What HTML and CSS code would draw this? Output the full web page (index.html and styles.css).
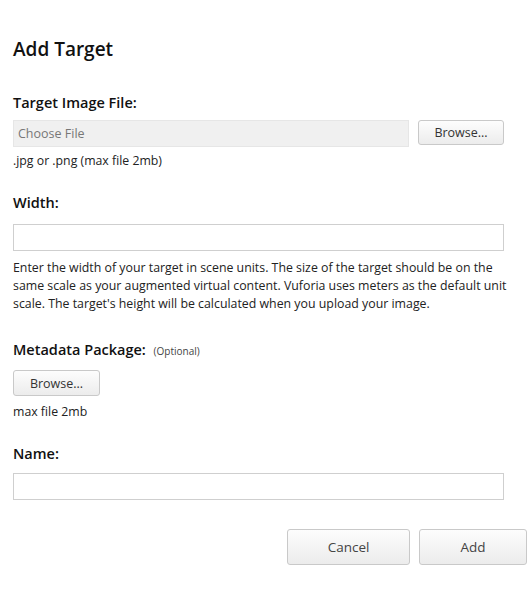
FILE: index.html
```html
<!DOCTYPE html>
<html>
<head>
<meta charset="utf-8">
<link rel="stylesheet" href="styles.css">
</head>
<body>
<div class="dialog">
  <h1 class="title">Add Target</h1>

  <div class="field field-file">
    <div class="label">Target Image File:</div>
    <div class="file-row">
      <div class="file-input">Choose File</div>
      <button class="btn btn-browse">Browse...</button>
    </div>
    <div class="hint">.jpg or .png (max file 2mb)</div>
  </div>

  <div class="field field-width">
    <div class="label">Width:</div>
    <div class="text-input"></div>
    <p class="desc">Enter the width of your target in scene units. The size of the target should be on the same scale as your augmented virtual content. Vuforia uses meters as the default unit scale. The target's height will be calculated when you upload your image.</p>
  </div>

  <div class="field field-meta">
    <div class="label">Metadata Package: <span class="optional">(Optional)</span></div>
    <button class="btn btn-browse-meta">Browse...</button>
    <div class="hint hint-meta">max file 2mb</div>
  </div>

  <div class="field field-name">
    <div class="label">Name:</div>
    <div class="text-input"></div>
  </div>

  <div class="actions">
    <button class="btn btn-action btn-cancel">Cancel</button>
    <button class="btn btn-action btn-add">Add</button>
  </div>
</div>
</body>
</html>
```

FILE: styles.css
```css
html, body {
  margin: 0;
  padding: 0;
  background: #fff;
}
body {
  font-family: "Open Sans", "Liberation Sans", sans-serif;
  color: #222;
}
.dialog {
  padding: 36px 24px 0 13px;
}
.title {
  margin: 0;
  font-size: 19px;
  font-weight: 600;
  line-height: 26px;
  color: #111;
}
.field-file {
  margin-top: 31px;
}
.label {
  font-size: 14.5px;
  font-weight: 600;
  line-height: 20px;
  color: #111;
}
.optional {
  font-size: 10px;
  font-weight: 400;
  color: #444;
  margin-left: 4px;
}
.file-row {
  display: flex;
  align-items: flex-start;
  margin-top: 7px;
  gap: 9px;
}
.file-input {
  width: 396px;
  height: 27px;
  box-sizing: border-box;
  background: #f0f0f0;
  border: 1px solid #e6e6e6;
  font-size: 12.5px;
  color: #777;
  line-height: 25px;
  padding-left: 4px;
}
.btn {
  font-family: "Open Sans", "Liberation Sans", sans-serif;
  background: linear-gradient(#fdfdfd, #ececec);
  border: 1px solid #c9c9c9;
  border-radius: 3px;
  color: #333;
  padding: 0;
  cursor: pointer;
}
.btn-browse {
  width: 86px;
  height: 25px;
  font-size: 12.5px;
}
.hint {
  font-size: 12.3px;
  line-height: 16px;
  margin-top: 6px;
  color: #222;
}
.hint-meta {
  margin-top: 8px;
}
.field-width {
  margin-top: 24px;
}
.text-input {
  width: 491px;
  height: 27px;
  box-sizing: border-box;
  border: 1px solid #cfcfcf;
  background: #fff;
  margin-top: 11px;
}
.desc {
  margin: 8px 0 0;
  font-size: 12.35px;
  line-height: 18px;
  color: #222;
  width: 512px;
}
.field-meta {
  margin-top: 27px;
}
.btn-browse-meta {
  display: block;
  width: 87px;
  height: 26px;
  font-size: 12.5px;
  margin-top: 9px;
}
.field-name {
  margin-top: 24px;
}
.field-name .text-input {
  margin-top: 9px;
}
.actions {
  display: flex;
  justify-content: flex-end;
  gap: 9px;
  margin-top: 29px;
  margin-right: -23px;
}
.btn-action {
  height: 36px;
  font-size: 13.5px;
  color: #444;
}
.btn-cancel {
  width: 123px;
}
.btn-add {
  width: 108px;
}
```
